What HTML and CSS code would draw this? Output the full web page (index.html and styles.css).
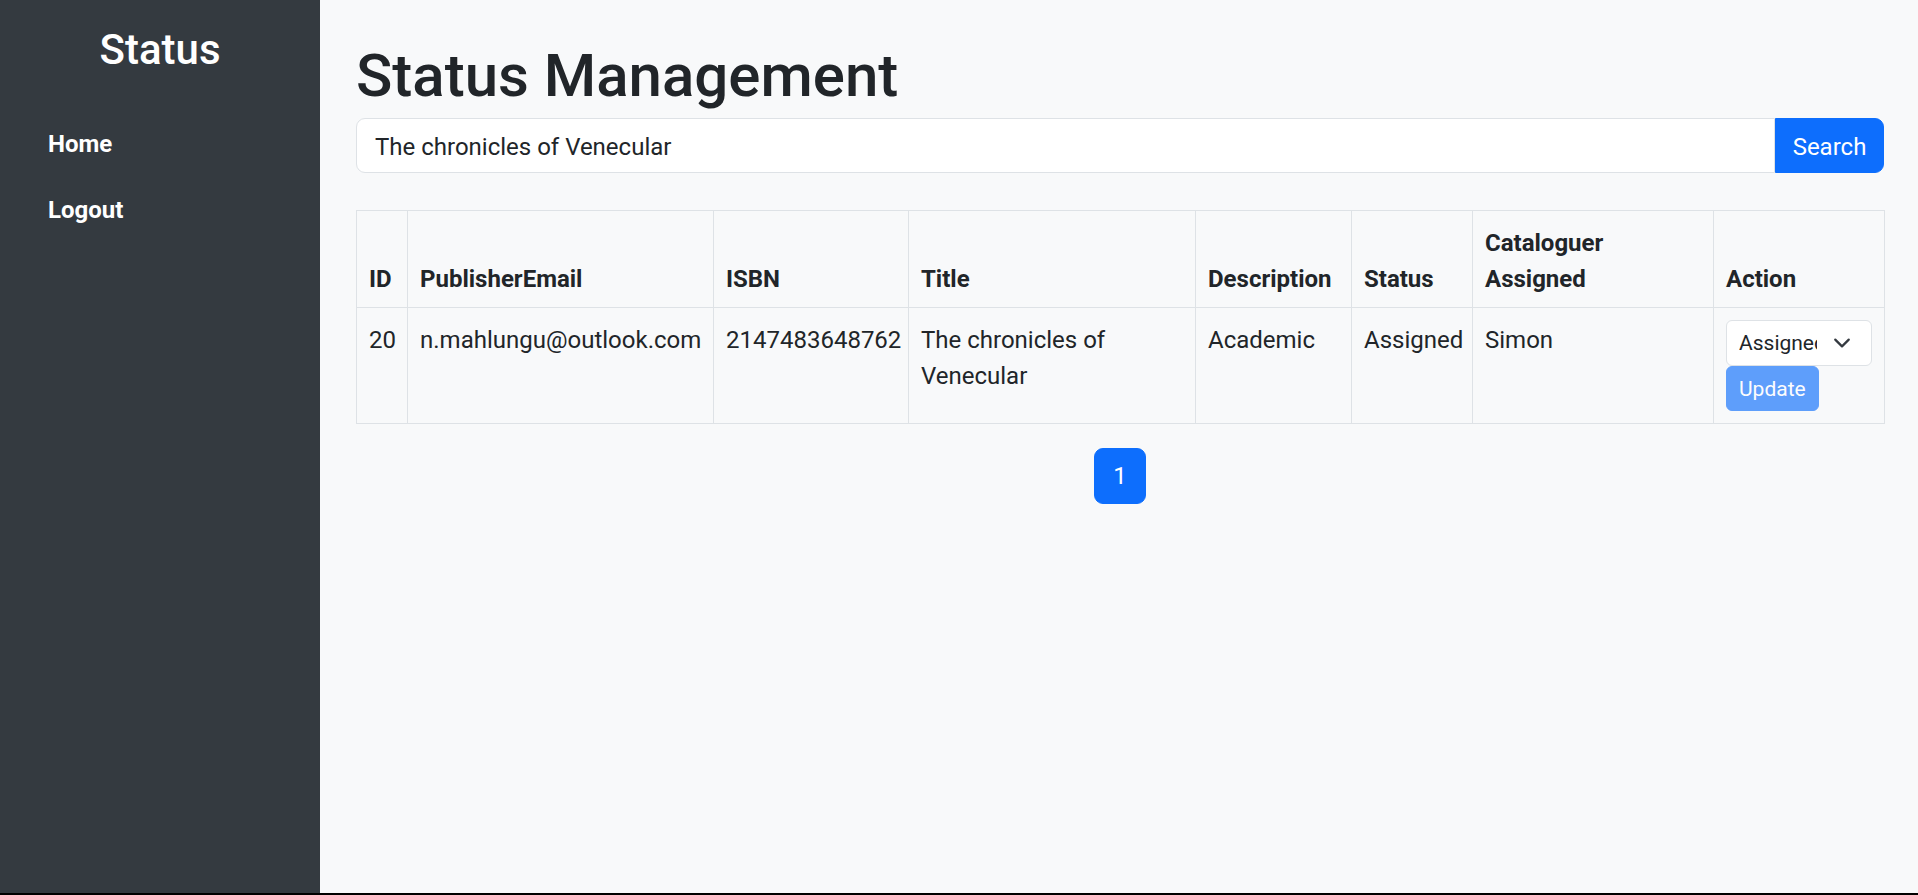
FILE: index.html
```html
<!DOCTYPE html>
<html lang="en">
<head>
<meta charset="utf-8">
<title>Status Management</title>
<link rel="stylesheet" href="styles.css">
</head>
<body>
<div class="app">
  <aside class="sidebar">
    <h2 class="brand">Status</h2>
    <nav class="nav">
      <a class="nav-link" href="#">Home</a>
      <a class="nav-link" href="#">Logout</a>
    </nav>
  </aside>
  <main class="main">
    <h1 class="page-title">Status Management</h1>
    <form class="search">
      <input class="search-input" type="text" value="The chronicles of Venecular">
      <button class="search-btn" type="button">Search</button>
    </form>
    <table class="grid">
      <colgroup>
        <col class="c-id"><col class="c-email"><col class="c-isbn"><col class="c-title">
        <col class="c-desc"><col class="c-status"><col class="c-cat"><col class="c-action">
      </colgroup>
      <thead>
        <tr>
          <th>ID</th>
          <th>PublisherEmail</th>
          <th>ISBN</th>
          <th>Title</th>
          <th>Description</th>
          <th>Status</th>
          <th>Cataloguer Assigned</th>
          <th>Action</th>
        </tr>
      </thead>
      <tbody>
        <tr>
          <td>20</td>
          <td>n.mahlungu@outlook.com</td>
          <td>2147483648762</td>
          <td>The chronicles of Venecular</td>
          <td>Academic</td>
          <td>Assigned</td>
          <td>Simon</td>
          <td class="action-cell">
            <div class="action">
              <div class="select-wrap">
                <select class="status-select">
                  <option selected>Assigned</option>
                  <option>Pending</option>
                  <option>Completed</option>
                </select>
                <svg class="chev" viewBox="0 0 16 16" aria-hidden="true"><path d="M2 5l6 6 6-6" fill="none" stroke="#343a40" stroke-width="2" stroke-linecap="round" stroke-linejoin="round"/></svg>
              </div>
              <button class="update-btn" type="button" disabled>Update</button>
            </div>
          </td>
        </tr>
      </tbody>
    </table>
    <nav class="pager">
      <a class="page-link" href="#">1</a>
    </nav>
  </main>
</div>
</body>
</html>
```

FILE: styles.css
```css
html {
  background: #000;
}

body {
  margin: 0;
  font-family: Roboto, "Liberation Sans", sans-serif;
  color: #212529;
}

.app {
  display: flex;
  height: 893px;
}

.sidebar {
  flex: none;
  width: 320px;
  box-sizing: border-box;
  padding-top: 25px;
  background: #343a40;
  color: #fff;
}

.brand {
  margin: 0;
  font-size: 42px;
  line-height: 50px;
  font-weight: 500;
  text-align: center;
}

.nav {
  display: flex;
  flex-direction: column;
  margin-top: 34px;
}

.nav-link {
  padding: 17px 0 13px 48px;
  font-size: 24px;
  line-height: 36px;
  font-weight: 700;
  color: #fff;
  text-decoration: none;
}

.main {
  flex: 1;
  min-width: 0;
  padding: 40px 34px 0 36px;
  background: #f8f9fa;
}

.page-title {
  margin: 0 0 6px;
  font-size: 60px;
  line-height: 72px;
  font-weight: 500;
  color: #212529;
}

.search {
  display: flex;
  margin: 0 0 37px;
}

.search-input {
  flex: 1;
  min-width: 0;
  box-sizing: border-box;
  height: 55px;
  padding: 10px 18px 8px;
  font-family: inherit;
  font-size: 24px;
  line-height: 36px;
  color: #212529;
  background: #fff;
  border: 1px solid #dee2e6;
  border-radius: 9px 0 0 9px;
  outline: none;
}

.search-btn {
  box-sizing: border-box;
  width: 109px;
  height: 55px;
  padding: 10px 0 8px;
  font-family: inherit;
  font-size: 24px;
  line-height: 36px;
  color: #fff;
  background: #0d6efd;
  border: 1px solid #0d6efd;
  border-radius: 0 9px 9px 0;
}

.grid {
  width: 100%;
  table-layout: fixed;
  border-collapse: collapse;
  font-size: 24px;
  line-height: 36px;
  color: #212529;
}

.c-id { width: 51px; }
.c-email { width: 306px; }
.c-isbn { width: 195px; }
.c-title { width: 287px; }
.c-desc { width: 156px; }
.c-status { width: 121px; }
.c-cat { width: 241px; }
.c-action { width: 171px; }

.grid th,
.grid td {
  padding: 14px 12px 10px;
  border: 1px solid #dee2e6;
  text-align: left;
  vertical-align: top;
}

.grid th {
  font-weight: 700;
  vertical-align: bottom;
}

.grid td.action-cell {
  padding: 12px;
}

.action {
  display: flex;
  flex-direction: column;
  align-items: flex-start;
}

.select-wrap {
  position: relative;
  align-self: stretch;
}

.status-select {
  display: block;
  width: 100%;
  box-sizing: border-box;
  appearance: none;
  -webkit-appearance: none;
  padding: 7px 54px 5px 12px;
  font-family: inherit;
  font-size: 21px;
  line-height: 31.5px;
  color: #212529;
  background: #fff;
  border: 1px solid #dee2e6;
  border-radius: 6px;
}

.chev {
  position: absolute;
  right: 18px;
  top: 50%;
  width: 24px;
  height: 18px;
  transform: translateY(-50%);
  pointer-events: none;
}

.update-btn {
  padding: 7px 12px 5px;
  font-family: inherit;
  font-size: 21px;
  line-height: 31.5px;
  color: #fff;
  background: #0d6efd;
  border: 1px solid #0d6efd;
  border-radius: 6px;
  opacity: 0.65;
}

.pager {
  display: flex;
  justify-content: center;
  margin-top: 24px;
}

.page-link {
  padding: 9px 18px;
  font-size: 24px;
  line-height: 36px;
  color: #fff;
  background: #0d6efd;
  border: 1px solid #0d6efd;
  border-radius: 9px;
  text-decoration: none;
}
```
